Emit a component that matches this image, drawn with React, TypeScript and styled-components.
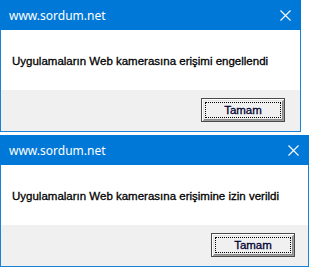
import React from "react";
import styled, { createGlobalStyle } from "styled-components";

const Global = createGlobalStyle`
  html, body { margin: 0; padding: 0; background: #ffffff; }
  body { width: 310px; height: 269px; overflow: hidden; }
`;

const Page = styled.div`
  display: flex;
  flex-direction: column;
  align-items: flex-start;
  gap: 3px;
`;

const Dialog = styled.div<{ $width: number }>`
  width: ${(p) => p.$width}px;
  display: flex;
  flex-direction: column;
  box-sizing: border-box;
`;

const TitleBar = styled.div`
  height: 30px;
  background: #0078d7;
  display: flex;
  align-items: center;
  justify-content: space-between;
  padding: 0 10px 0 9px;
  box-sizing: border-box;
`;

const Title = styled.span`
  font-family: "Noto Sans", "Open Sans", sans-serif;
  font-size: 12px;
  color: #ffffff;
  margin-top: 1px;
`;

const Frame = styled.div`
  border: 1px solid #1a82d6;
  border-top: none;
  display: flex;
  flex-direction: column;
`;

const Content = styled.div`
  height: 60px;
  background: #ffffff;
  display: flex;
  align-items: center;
  padding-left: 11px;
`;

const Message = styled.span`
  font-family: "Liberation Sans", Arial, sans-serif;
  font-size: 11.5px;
  color: #000000;
  -webkit-text-stroke: 0.3px #000;
  margin-top: 1px;
`;

const Footer = styled.div<{ $right: number }>`
  height: 41px;
  background: #f0f0f0;
  display: flex;
  justify-content: flex-end;
  align-items: flex-start;
  padding: 8px ${(p) => p.$right}px 0 0;
  box-sizing: border-box;
`;

const Button = styled.button`
  position: relative;
  width: 84px;
  height: 24px;
  padding: 0;
  background: #f0f0f0;
  border: 1px solid #4a4a4a;
  box-shadow: inset 1px 1px 0 #ffffff, inset -1px -1px 0 #a0a0a0, inset 2px 2px 0 #e3e3e3, inset -2px -2px 0 #8a8a8a;
  font-family: "Liberation Sans", Arial, sans-serif;
  font-size: 11.5px;
  color: #000033;
  -webkit-text-stroke: 0.3px #000033;
  cursor: default;
  &::after {
    content: "";
    position: absolute;
    inset: 3px;
    border: 1px dotted #000000;
  }
`;

const CloseIcon = () => (
  <svg width="11" height="11" viewBox="0 0 11 11">
    <path d="M0.5 0.5 L10.5 10.5 M10.5 0.5 L0.5 10.5" stroke="#ffffff" strokeWidth="1.1" fill="none" />
  </svg>
);

const MessageBox = ({ width, text, right }: { width: number; text: string; right: number }) => (
  <Dialog $width={width}>
    <TitleBar>
      <Title>www.sordum.net</Title>
      <CloseIcon />
    </TitleBar>
    <Frame>
      <Content>
        <Message>{text}</Message>
      </Content>
      <Footer $right={right}>
        <Button>Tamam</Button>
      </Footer>
    </Frame>
  </Dialog>
);

export default function App() {
  return (
    <>
      <Global />
      <Page>
        <MessageBox width={301} right={15} text="Uygulamaların Web kamerasına erişimi engellendi" />
        <MessageBox width={309} right={13} text="Uygulamaların Web kamerasına erişimine izin verildi" />
      </Page>
    </>
  );
}
